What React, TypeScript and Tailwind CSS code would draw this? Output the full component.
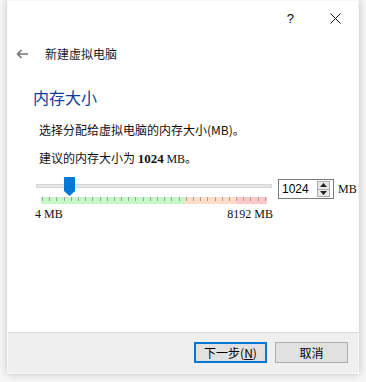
import React from "react";

const CJK = { fontFamily: '"Noto Sans CJK SC", "Noto Sans", sans-serif' };
const SERIF = { fontFamily: '"Liberation Serif", "Noto Sans CJK SC", serif' };

const TICKS = Array.from({ length: 32 });

const SEGMENTS = [
  { w: 144, color: "bg-[#c6f7c6]" },
  { w: 51, color: "bg-[#ffdcc8]" },
  { w: 31, color: "bg-[#ffc8c8]" },
];

const Slider = () => (
  <div className="w-[236px] shrink-0">
    {/* track + handle */}
    <div className="relative h-[26px]">
      <div className="absolute left-0 right-0 top-[13px] h-[4px] bg-[#e7e7e7] border border-[#d6d6d6]" />
      <svg
        className="absolute left-[28px] top-[6px]"
        width="11"
        height="19"
        viewBox="0 0 11 19"
      >
        <path d="M1 0 H10 A1 1 0 0 1 11 1 V14 L5.5 19 L0 14 V1 A1 1 0 0 1 1 0 Z" fill="#0078d7" />
      </svg>
    </div>
    {/* colour band with ticks */}
    <div className="relative mx-[5px] h-[7px] flex">
      {SEGMENTS.map((s, i) => (
        <div key={i} className={`h-full ${s.color}`} style={{ width: s.w }} />
      ))}
      <div className="absolute inset-x-0 top-0 flex justify-between px-[1px]">
        {TICKS.map((_, i) => (
          <div key={i} className="w-px h-[4px] bg-[#a0a0a0]" />
        ))}
      </div>
    </div>
    <div className="flex justify-between mt-[3px] text-[12px] leading-[14px] text-[#111]" style={SERIF}>
      <span className="-ml-[1px]">4 MB</span>
      <span className="mr-[-1px]">8192 MB</span>
    </div>
  </div>
);

const SpinBox = () => (
  <div className="flex items-center h-[20px] w-[56px] border border-[#7a7a7a] bg-white pl-[3px] pr-[3px]">
    <span className="flex-1 text-[12px] leading-none text-black" style={{ fontFamily: '"Liberation Sans", sans-serif' }}>
      1024
    </span>
    <div className="flex flex-col w-[13px] h-[16px] border border-[#adadad] bg-[#e8e8e8]">
      <div className="flex-1 flex items-center justify-center border-b border-[#adadad]">
        <svg width="7" height="4" viewBox="0 0 7 4">
          <path d="M0 4 L3.5 0 L7 4 Z" fill="#222" />
        </svg>
      </div>
      <div className="flex-1 flex items-center justify-center">
        <svg width="7" height="4" viewBox="0 0 7 4">
          <path d="M0 0 L3.5 4 L7 0 Z" fill="#222" />
        </svg>
      </div>
    </div>
  </div>
);

export default function App() {
  return (
    <div className="w-[366px] h-[382px] bg-[#f6f6f6] pl-[7px] overflow-hidden">
      <div
        className="w-[352px] h-[374px] bg-white flex flex-col shadow-[0_0_8px_rgba(0,0,0,0.22)] border border-[#f8f8f8]"
        style={CJK}
      >
        {/* Title bar */}
        <div className="h-[35px] flex items-center justify-end shrink-0">
          <span className="text-[13px] text-black mr-[36px]" style={{ fontFamily: '"Liberation Sans", sans-serif' }}>
            ?
          </span>
          <svg className="mr-[17px]" width="11" height="11" viewBox="0 0 11 11">
            <path d="M0.5 0.5 L10.5 10.5 M10.5 0.5 L0.5 10.5" stroke="#111" strokeWidth="1" />
          </svg>
        </div>

        {/* Header */}
        <div className="h-[36px] flex items-center shrink-0">
          <svg className="ml-[8px]" width="12" height="10" viewBox="0 0 12 10">
            <path d="M12 5 H1.5 M5.5 1 L1.5 5 L5.5 9" stroke="#777" strokeWidth="1.6" fill="none" />
          </svg>
          <span className="ml-[17px] text-[12px] text-[#1a1a1a]">新建虚拟电脑</span>
        </div>

        {/* Content */}
        <div className="flex-1 pl-[25px]">
          <div className="mt-[14px] text-[16px] leading-[22px] text-[#0a3aa0]">内存大小</div>
          <div className="pl-[6px]">
            <div className="mt-[12px] text-[12px] leading-[20px] text-[#111]">
              选择分配给虚拟电脑的内存大小(MB)。
            </div>
            <div className="mt-[8px] text-[12px] leading-[20px] text-[#111]">
              建议的内存大小为{" "}
              <b className="font-bold text-[13px]" style={SERIF}>1024</b>{" "}
              <span style={SERIF}>MB</span>。
            </div>
          </div>
          <div className="mt-[2px] ml-[3px] flex items-start">
            <Slider />
            <div className="ml-[6px] mt-[8px]">
              <SpinBox />
            </div>
            <span className="ml-[4px] mt-[11px] text-[12px] leading-[14px] text-[#111]" style={SERIF}>
              MB
            </span>
          </div>
        </div>

        {/* Footer */}
        <div className="h-[41px] shrink-0 bg-[#efefef] border-t border-[#dcdcdc] flex justify-end items-start pt-[9px] pr-[10px] gap-[8px]">
          <button className="w-[73px] h-[21px] bg-[#e1e1e1] border-2 border-[#0078d7] text-[12px] leading-none text-black">
            下一步(<span className="underline">N</span>)
          </button>
          <button className="w-[73px] h-[21px] bg-[#e1e1e1] border border-[#adadad] text-[12px] leading-none text-black">
            取消
          </button>
        </div>
      </div>
    </div>
  );
}
